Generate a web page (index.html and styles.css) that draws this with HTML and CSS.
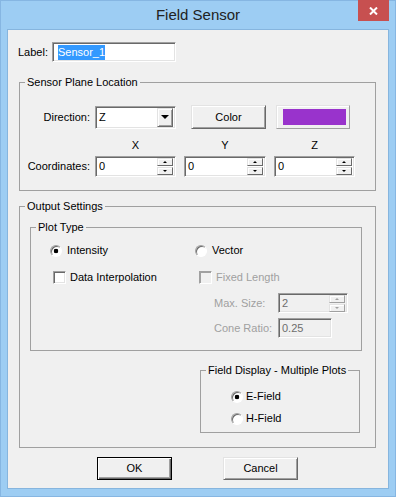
FILE: index.html
```html
<!DOCTYPE html>
<html>
<head>
    <title>Field Sensor</title>
    <link rel="stylesheet" href="styles.css">
</head>
<body>
    <div class="window">
        <div class="titlebar">
            <span></span>
            <div class="title">Field Sensor</div>
            <div class="close">
                <svg width="9" height="8" viewBox="0 0 9 8"><path d="M1 0.5 L8 7.5 M8 0.5 L1 7.5" stroke="#fff" stroke-width="2"/></svg>
            </div>
        </div>
        <div class="client">
            <div class="label-row">
                <span>Label:</span>
                <div class="field label-input"><span class="sel">Sensor_1</span></div>
            </div>

            <fieldset class="group plane">
                <legend>Sensor Plane Location</legend>
                <div class="row dir-row">
                    <span class="row-label">Direction:</span>
                    <div class="field combo">
                        <span class="val">Z</span>
                        <span class="drop"><span class="arrow-down"></span></span>
                    </div>
                    <div class="btn color-btn">Color</div>
                    <div class="swatch"><span class="swatch-fill"></span></div>
                </div>
                <div class="row axis-row">
                    <span class="axis-gap"></span>
                    <span class="axis c1">X</span>
                    <span class="axis c2">Y</span>
                    <span class="axis c3">Z</span>
                </div>
                <div class="row coord-row">
                    <span class="row-label">Coordinates:</span>
                    <div class="field spin c1">
                        <span class="val">0</span>
                        <span class="spin-btns"><span class="sb"><span class="tri-up"></span></span><span class="sb"><span class="tri-down"></span></span></span>
                    </div>
                    <div class="field spin c2">
                        <span class="val">0</span>
                        <span class="spin-btns"><span class="sb"><span class="tri-up"></span></span><span class="sb"><span class="tri-down"></span></span></span>
                    </div>
                    <div class="field spin c3">
                        <span class="val">0</span>
                        <span class="spin-btns"><span class="sb"><span class="tri-up"></span></span><span class="sb"><span class="tri-down"></span></span></span>
                    </div>
                </div>
            </fieldset>

            <fieldset class="group output">
                <legend>Output Settings</legend>
                <fieldset class="group plot">
                    <legend>Plot Type</legend>
                    <div class="opt-row radios">
                        <div class="opt col1"><span class="radio on"></span>Intensity</div>
                        <div class="opt"><span class="radio"></span>Vector</div>
                    </div>
                    <div class="opt-row checks">
                        <div class="opt col1"><span class="check"></span>Data Interpolation</div>
                        <div class="opt disabled"><span class="check off"></span>Fixed Length</div>
                    </div>
                    <div class="opt-row param">
                        <span class="param-label">Max. Size:</span>
                        <div class="field spin dis max-size">
                            <span class="val">2</span>
                            <span class="spin-btns"><span class="sb"><span class="tri-up"></span></span><span class="sb"><span class="tri-down"></span></span></span>
                        </div>
                    </div>
                    <div class="opt-row param cone">
                        <span class="param-label">Cone Ratio:</span>
                        <div class="field dis cone-ratio"><span class="val">0.25</span></div>
                    </div>
                </fieldset>

                <fieldset class="group fdisplay">
                    <legend>Field Display - Multiple Plots</legend>
                    <div class="opt"><span class="radio on"></span>E-Field</div>
                    <div class="opt second"><span class="radio"></span>H-Field</div>
                </fieldset>
            </fieldset>

            <div class="buttons">
                <div class="btn default">OK</div>
                <div class="btn">Cancel</div>
            </div>
        </div>
    </div>
</body>
</html>
```

FILE: styles.css
```css
* {
    box-sizing: border-box;
}

body {
    margin: 0;
    font-family: "Liberation Sans", Arial, sans-serif;
    font-size: 11px;
    line-height: 13px;
    color: #000;
}

.window {
    width: 396px;
    height: 497px;
    background-color: #9dcdf3;
    border: 1px solid #86b6e2;
    padding: 0 6px;
}

.titlebar {
    display: grid;
    grid-template-columns: 1fr auto 1fr;
    height: 28px;
}

.title {
    font-size: 15px;
    line-height: 28px;
    color: #222;
}

.close {
    justify-self: end;
    width: 31px;
    height: 21px;
    margin-top: -1px;
    background-color: #c75050;
    display: flex;
    justify-content: center;
    align-items: center;
}

.client {
    height: 460px;
    background-color: #f0f0f0;
    border: 1px solid #86b5de;
}

/* sunken edit box */
.field {
    display: flex;
    align-items: center;
    background-color: #fff;
    border: 1px solid;
    border-color: #a0a0a0 #fff #fff #a0a0a0;
    box-shadow: inset 1px 1px 0 #696969, inset -1px -1px 0 #e3e3e3;
    padding-left: 3px;
}

.field .val {
    flex: 1;
}

.field.dis {
    background-color: #f0f0f0;
    color: #6d6d6d;
}

.label-row {
    display: flex;
    align-items: center;
    margin: 12px 0 0 10px;
}

.label-input {
    width: 124px;
    height: 20px;
    margin-left: 4px;
    padding-left: 5px;
}

.sel {
    background-color: #3399ff;
    color: #fff;
    line-height: 15px;
}

/* group boxes */
.group {
    border: 1px solid #a0a0a0;
    margin: 0;
    padding: 0;
    min-width: 0;
}

.group legend {
    padding: 0 2px;
    margin-left: 5px;
    line-height: 13px;
    white-space: nowrap;
}

.plane {
    width: 357px;
    margin: 14px 0 0 11px;
    padding: 16px 0 13px;
}

.row {
    display: flex;
    align-items: center;
}

.row-label {
    width: 70px;
    margin-right: 5px;
    text-align: right;
}

.dir-row {
    height: 24px;
}

.combo {
    width: 81px;
    height: 23px;
    padding-right: 2px;
}

.drop {
    width: 16px;
    height: 19px;
    background-color: #f0f0f0;
    border: 1px solid;
    border-color: #e3e3e3 #696969 #696969 #e3e3e3;
    box-shadow: inset 1px 1px 0 #fff, inset -1px -1px 0 #a0a0a0;
    display: flex;
    justify-content: center;
    align-items: center;
}

.arrow-down {
    border-left: 4px solid transparent;
    border-right: 4px solid transparent;
    border-top: 4px solid #000;
}

/* raised push button */
.btn {
    width: 75px;
    height: 23px;
    display: flex;
    justify-content: center;
    align-items: center;
    background-color: #f0f0f0;
    border: 1px solid;
    border-color: #e3e3e3 #696969 #696969 #e3e3e3;
    box-shadow: inset 1px 1px 0 #fff, inset -1px -1px 0 #a0a0a0;
}

.btn.default {
    border-color: #000;
    box-shadow: inset 1px 1px 0 #fff, inset -1px -1px 0 #696969, inset -2px -2px 0 #a0a0a0;
}

.color-btn {
    height: 24px;
    margin-left: 15px;
}

.swatch {
    width: 74px;
    height: 24px;
    margin-left: 10px;
    border: 1px solid;
    border-color: #e3e3e3 #a0a0a0 #a0a0a0 #e3e3e3;
    box-shadow: inset 1px 1px 0 #fff;
    padding: 3px 2px 0 6px;
}

.swatch-fill {
    display: block;
    width: 63px;
    height: 16px;
    background-color: #9933cc;
}

.axis-row {
    margin-top: 10px;
}

.axis-gap {
    width: 75px;
}

.axis {
    text-align: center;
}

.c1 {
    width: 81px;
}

.c2 {
    width: 82px;
    margin-left: 8px;
}

.c3 {
    width: 81px;
    margin-left: 8px;
}

.coord-row {
    margin-top: 4px;
}

.spin {
    height: 21px;
    padding-right: 2px;
}

.spin-btns {
    display: flex;
    flex-direction: column;
    gap: 1px;
}

.sb {
    width: 16px;
    height: 8px;
    background-color: #f0f0f0;
    border: 1px solid;
    border-color: #e3e3e3 #696969 #696969 #e3e3e3;
    box-shadow: inset 1px 1px 0 #fff;
    display: flex;
    justify-content: center;
    align-items: center;
}

.tri-up {
    border-left: 2px solid transparent;
    border-right: 2px solid transparent;
    border-bottom: 2px solid #000;
}

.tri-down {
    border-left: 2px solid transparent;
    border-right: 2px solid transparent;
    border-top: 2px solid #000;
}

.dis .sb {
    border-color: #e3e3e3 #a0a0a0 #a0a0a0 #e3e3e3;
}

.dis .tri-up {
    border-bottom-color: #a0a0a0;
}

.dis .tri-down {
    border-top-color: #a0a0a0;
}

/* output settings */
.output {
    width: 357px;
    margin: 9px 0 0 11px;
    padding: 8px 0 14px;
}

.plot {
    width: 332px;
    margin-left: 10px;
    padding: 10px 0 12px;
}

.opt-row {
    display: flex;
    align-items: center;
}

.opt {
    display: flex;
    align-items: center;
    height: 13px;
}

.radios {
    margin-left: 19px;
}

.col1 {
    width: 145px;
}

.radio {
    flex: none;
    width: 12px;
    height: 12px;
    margin-right: 5px;
    border-radius: 50%;
    background-color: #fff;
    border: 1px solid;
    border-color: #a0a0a0 #fff #fff #a0a0a0;
    box-shadow: inset 1px 1px 0 #696969;
}

.radio.on {
    background: radial-gradient(circle at 5px 5px, #000 2px, #fff 2.6px);
}

.checks {
    margin: 14px 0 0 22px;
}

.checks .col1 {
    width: 146px;
}

.check {
    flex: none;
    width: 13px;
    height: 13px;
    margin-right: 4px;
    background-color: #fff;
    border: 1px solid;
    border-color: #a0a0a0 #fff #fff #a0a0a0;
    box-shadow: inset 1px 1px 0 #696969, inset -1px -1px 0 #e3e3e3;
}

.check.off {
    background-color: #f0f0f0;
    box-shadow: inset 1px 1px 0 #a0a0a0;
}

.disabled,
.param-label {
    color: #a0a0a0;
}

.param {
    margin: 9px 0 0 183px;
}

.param.cone {
    margin-top: 5px;
}

.param-label {
    width: 64px;
}

.max-size {
    width: 70px;
    height: 20px;
}

.cone-ratio {
    width: 54px;
    height: 20px;
}

.fdisplay {
    width: 160px;
    margin: 13px 0 0 180px;
    padding: 13px 0 7px;
}

.fdisplay .opt {
    margin-left: 30px;
}

.fdisplay .radio {
    margin-right: 3px;
}

.fdisplay .second {
    margin-top: 9px;
}

.buttons {
    display: flex;
    gap: 51px;
    margin: 9px 0 0 89px;
}
```
